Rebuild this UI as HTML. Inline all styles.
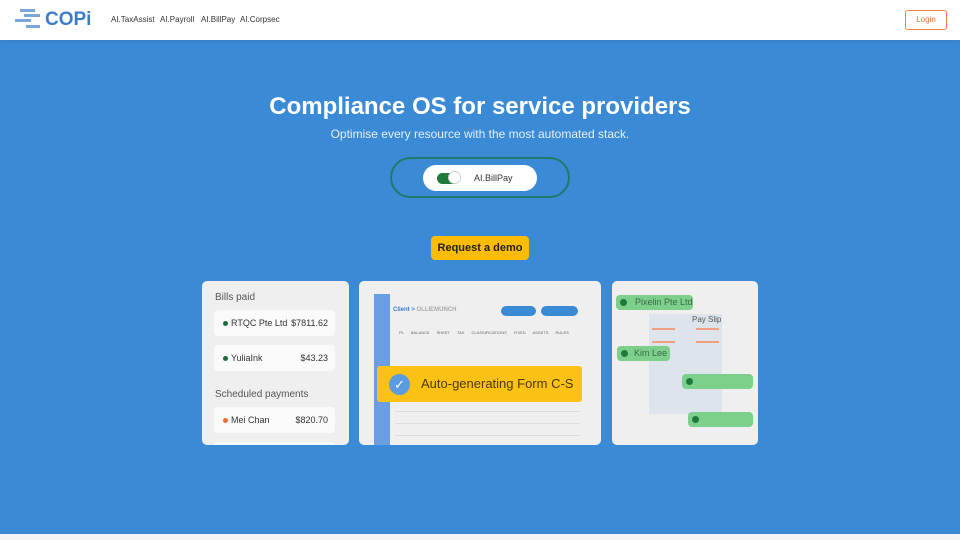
<!DOCTYPE html>
<html><head><meta charset="utf-8"><style>
*{margin:0;padding:0;box-sizing:border-box}
body{width:960px;height:540px;overflow:hidden;font-family:"Liberation Sans",sans-serif;background:#3a8ad5;position:relative}
.nav{position:absolute;left:0;top:0;width:960px;height:40px;background:#fff;box-shadow:0 1px 3px rgba(0,0,0,.1)}
.nav a{position:absolute;top:15px;font-size:8px;color:#333}
.abs{position:absolute}
.card{position:absolute;background:#efefef;border-radius:5px;overflow:hidden}
.row{position:absolute;left:12px;width:121px;height:26px;background:#fafafa;border-radius:4px;font-size:9px;color:#333}
.row span{position:absolute;top:8px}
.dot{position:absolute;left:9px;top:11px;width:5px;height:5px;border-radius:50%}
.g{position:absolute;background:#7dcf8c;border-radius:4px;font-size:9px;color:#3a6b45;height:15px}
.g i{position:absolute;left:4px;top:4px;width:7px;height:7px;border-radius:50%;background:#1e7a3a}
</style></head><body>
<div class="nav">
<div class="abs" style="left:20px;top:9px;width:15px;height:3px;background:#7ba6d8"></div>
<div class="abs" style="left:24px;top:14px;width:16px;height:3px;background:#7ba6d8"></div>
<div class="abs" style="left:15px;top:19px;width:16px;height:3px;background:#7ba6d8"></div>
<div class="abs" style="left:26px;top:25px;width:14px;height:3px;background:#7ba6d8"></div>
<div class="abs" style="left:45px;top:9px;font-size:19px;font-weight:bold;color:#3c7cc9">COPi</div>
<a style="left:111px">AI.TaxAssist</a><a style="left:160px">AI.Payroll</a><a style="left:201px">AI.BillPay</a><a style="left:240px">AI.Corpsec</a>
<div class="abs" style="left:905px;top:10px;width:42px;height:20px;border:1px solid #f08040;border-radius:3px;color:#e87030;font-size:8px;text-align:center;line-height:18px">Login</div>
</div>
<div class="abs" style="left:0;top:93px;width:960px;text-align:center;color:#fff;font-size:24px;font-weight:bold">Compliance OS for service providers</div>
<div class="abs" style="left:0;top:127px;width:960px;text-align:center;color:#e6f0fa;font-size:12px">Optimise every resource with the most automated stack.</div>
<div class="abs" style="left:390px;top:157px;width:180px;height:41px;border:2px solid #1f7a6a;border-radius:21px"></div>
<div class="abs" style="left:423px;top:165px;width:114px;height:26px;background:#fff;border-radius:13px">
<div class="abs" style="left:14px;top:8px;width:22px;height:11px;background:#1e7a3a;border-radius:6px"></div>
<div class="abs" style="left:25px;top:6px;width:13px;height:13px;background:#fff;border:1px solid #ccc;border-radius:50%"></div>
<div class="abs" style="left:51px;top:8px;font-size:9px;color:#333">AI.BillPay</div></div>
<div class="abs" style="left:431px;top:236px;width:98px;height:24px;background:#fbbc05;border-radius:4px;text-align:center;line-height:24px;font-size:11px;font-weight:bold;color:#222">Request a demo</div>
<div class="card" style="left:202px;top:281px;width:147px;height:164px">
<div class="abs" style="left:13px;top:11px;font-size:10px;color:#555">Bills paid</div>
<div class="row" style="top:29px"><div class="dot" style="background:#1e6e3a"></div><span style="left:17px">RTQC Pte Ltd</span><span style="right:7px">$7811.62</span></div>
<div class="row" style="top:64px"><div class="dot" style="background:#1e6e3a"></div><span style="left:17px">YuliaInk</span><span style="right:7px">$43.23</span></div>
<div class="abs" style="left:13px;top:108px;font-size:10px;color:#555">Scheduled payments</div>
<div class="row" style="top:126px"><div class="dot" style="background:#f07030"></div><span style="left:17px">Mei Chan</span><span style="right:7px">$820.70</span></div>
<div class="row" style="top:161px"></div>
</div>
<div class="card" style="left:359px;top:281px;width:242px;height:164px">
<div class="abs" style="left:15px;top:13px;width:16px;height:151px;background:#6a9ee0"></div>
<div class="abs" style="left:34px;top:26px;font-size:6px;color:#3a7acd;font-weight:bold">Client &gt; <span style="color:#aaa">OLLIEMUNCH</span></div>
<div class="abs" style="left:142px;top:25px;width:35px;height:10px;background:#3a8ad5;border-radius:5px"></div>
<div class="abs" style="left:182px;top:25px;width:37px;height:10px;background:#3a8ad5;border-radius:5px"></div>
<div class="abs" style="left:40px;top:49px;font-size:4px;color:#666;word-spacing:6px">PL BALANCE SHEET TAX CLASSIFICATIONS FIXED ASSETS RULES</div>
<div class="abs" style="left:18px;top:85px;width:205px;height:36px;background:#fbc114;border-radius:3px">
<div class="abs" style="left:12px;top:8px;width:21px;height:21px;border-radius:50%;background:#5b9be0;color:#fff;font-size:13px;text-align:center;line-height:21px">✓</div>
<div class="abs" style="left:44px;top:10px;font-size:13px;color:#4a3a08">Auto-generating Form C-S</div></div>
<div class="abs" style="left:36px;top:130px;width:185px;height:1px;background:#ddd"></div>
<div class="abs" style="left:36px;top:142px;width:185px;height:1px;background:#ddd"></div>
<div class="abs" style="left:36px;top:154px;width:185px;height:1px;background:#ddd"></div>
</div>
<div class="card" style="left:612px;top:281px;width:146px;height:164px">
<div class="abs" style="left:37px;top:33px;width:73px;height:100px;background:#dde4ec"></div>
<div class="abs" style="left:80px;top:34px;font-size:8px;color:#555">Pay Slip</div>
<div class="abs" style="left:40px;top:47px;width:23px;height:2px;background:#f0a080"></div>
<div class="abs" style="left:84px;top:47px;width:23px;height:2px;background:#f0a080"></div>
<div class="abs" style="left:40px;top:60px;width:23px;height:2px;background:#f0a080"></div>
<div class="abs" style="left:84px;top:60px;width:23px;height:2px;background:#f0a080"></div>
<div class="g" style="left:4px;top:14px;width:77px"><i></i><span style="position:absolute;left:19px;top:2px">Pixelin Pte Ltd</span></div>
<div class="g" style="left:5px;top:65px;width:53px"><i></i><span style="position:absolute;left:17px;top:2px">Kim Lee</span></div>
<div class="g" style="left:70px;top:93px;width:71px"><i></i></div>
<div class="g" style="left:76px;top:131px;width:65px"><i></i></div>
</div>
<div class="abs" style="left:0;top:534px;width:960px;height:6px;background:#f4f4f4"></div>
</body></html>
